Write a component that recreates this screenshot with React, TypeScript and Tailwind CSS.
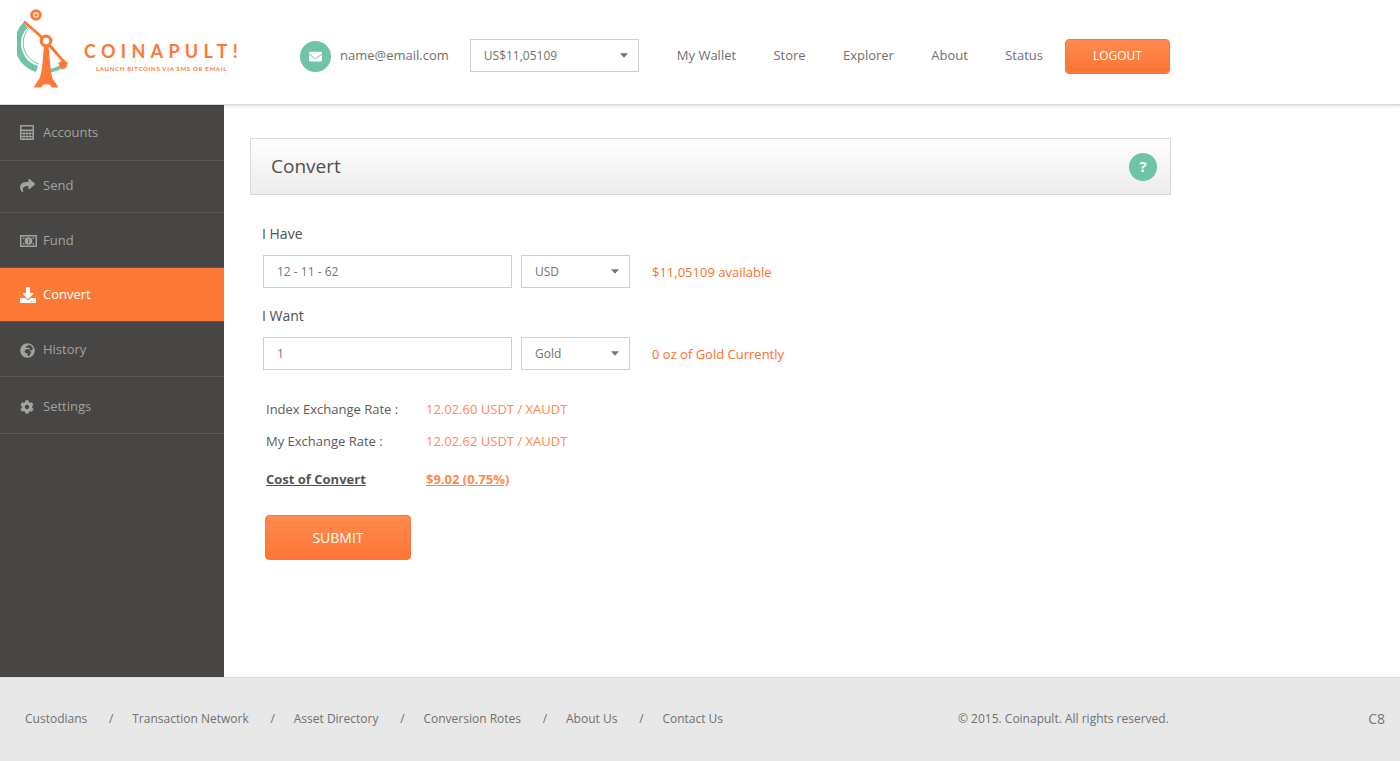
import React from "react";
import { FaEnvelope, FaShare, FaDownload, FaGlobeAfrica, FaCog } from "react-icons/fa";

const Caret = () => (
  <svg width="8" height="5" viewBox="0 0 8 5" className="shrink-0">
    <path d="M0 0.2h8L4 4.8z" fill="#757575" />
  </svg>
);

const Calc = ({ className }: { className?: string }) => (
  <svg width="14" height="15" viewBox="0 0 14 15" className={className}>
    <path fill="currentColor" fillRule="evenodd" d="M1 0h12a1 1 0 0 1 1 1v13a1 1 0 0 1-1 1H1a1 1 0 0 1-1-1V1a1 1 0 0 1 1-1zm.5 1.5v3h11v-3zm0 4.5v2h2v-2zm3 0v2h2v-2zm3 0v2h2v-2zm3 0v2h2v-2zm-9 3v2h2v-2zm3 0v2h2v-2zm3 0v2h2v-2zm3 0v2h2v-2zm-9 3v1.500h2V12zm3 0v1.500h2V12zm3 0v1.500h2V12zm3 0v1.500h2V12z" />
  </svg>
);

const Money = () => (
  <svg width="17" height="12" viewBox="0 0 17 12">
    <path fill="currentColor" fillRule="evenodd" d="M0 0h17v12H0zM1.500 1.500v9h14v-9zM8.500 2.200a3.800 3.800 0 1 1 0 7.600 3.800 3.800 0 0 1 0-7.600zM3 2.500l1.800 0A2 2 0 0 1 3 4.300zM14 2.500v1.800A2 2 0 0 1 12.200 2.500zM3 9.500V7.700A2 2 0 0 1 4.800 9.500zM14 9.500h-1.800A2 2 0 0 1 14 7.700z" />
    <path fill="#474644" d="M8 4l1.200-.6v5H8z" opacity="0.75" />
  </svg>
);

const Logo = () => (
  <svg width="52" height="80" viewBox="17 9 52 80" className="shrink-0">
    <path d="M25.500 25A26.500 26.500 0 0 0 37 69" fill="none" stroke="#6fc3a6" strokeWidth="6.500" />
    <path d="M30 27A22 22 0 0 0 39 64" fill="none" stroke="#6fc3a6" strokeWidth="1" />
    <path d="M50 70.500Q56 70 61 66.500" stroke="#6fc3a6" strokeWidth="3.500" fill="none" />
    <circle cx="36" cy="15" r="5.800" fill="#fd7a36" />
    <circle cx="36" cy="15" r="2.200" fill="none" stroke="#fff" strokeWidth="1.200" />
    <path d="M24 21.500 L46 41 L64 62" stroke="#fd7a36" strokeWidth="2.800" fill="none" />
    <path d="M58 63l6-3 4 3-2 5-4.500 1.500z" fill="#fd7a36" />
    <path d="M44 46h4.500L50.500 68 52 77.500 58.500 87.500H52L49.500 84.500H43.500L41 87.500H33.500L40 77.500 42 68z" fill="#fd7a36" />
    <circle cx="46" cy="41" r="4.800" fill="#fff" stroke="#fd7a36" strokeWidth="3.200" />
  </svg>
);

const navItems = [
  { label: "Accounts", icon: <Calc />, cls: "h-[56px]" },
  { label: "Send", icon: <FaShare size={15} />, cls: "h-[52px] pb-[2px]" },
  { label: "Fund", icon: <Money />, cls: "h-[55px] pt-[2px]" },
  { label: "Convert", icon: <FaDownload size={16} />, cls: "h-[54px]", active: true },
  { label: "History", icon: <FaGlobeAfrica size={15} />, cls: "h-[55px] pt-[2px]" },
  { label: "Settings", icon: <FaCog size={14} />, cls: "h-[57px] pt-[4px]" },
];

const Select = ({ value, cls }: { value: string; cls: string }) => (
  <div className={`flex h-[33px] items-center justify-between border border-[#cfcfcf] bg-white pl-[13px] pr-[10px] text-[12px] text-[#737373] ${cls}`}>
    <span>{value}</span>
    <Caret />
  </div>
);

const FieldRow = ({ value, unit, note }: { value: string; unit: string; note: string }) => (
  <div className="flex items-center">
    <input
      readOnly
      value={value}
      className="h-[33px] w-[249px] border border-[#cfcfcf] bg-white pl-[13px] text-[12px] text-[#777] outline-none"
    />
    <Select value={unit} cls="ml-[9px] w-[109px]" />
    <span className="ml-[22px] pt-[3px] text-[13px] text-[#fb6f2c]">{note}</span>
  </div>
);

const btn = "flex items-center justify-center rounded-[4px] border border-[#f9763a] bg-gradient-to-b from-[#ff8a50] to-[#fd7533] text-white";

const footerLinks = ["Custodians", "Transaction Network", "Asset Directory", "Conversion Rotes", "About Us", "Contact Us"];

export default function App() {
  return (
    <div className="flex h-[761px] w-[1400px] flex-col overflow-hidden bg-white font-['Open_Sans',sans-serif] text-[#666]">
      <header className="z-10 flex h-[105px] shrink-0 items-center border-b border-[#d8d8d8] bg-white pl-[17px] pt-[8px] shadow-[0_1px_3px_rgba(0,0,0,0.15)]">
        <div className="flex w-[283px] items-center self-start pt-[1px]">
          <Logo />
          <div className="ml-[15px] mt-[16px] flex flex-col">
            <span className="whitespace-nowrap font-['Lato',sans-serif] text-[18px] font-bold leading-[20px] tracking-[5.3px] text-[#fd7a36]">COINAPULT!</span>
            <span className="mt-[4px] whitespace-nowrap pl-[12px] font-['Lato',sans-serif] text-[6px] font-bold leading-[8px] tracking-[0.7px] text-[#fd7a36]">LAUNCH BITCOINS VIA SMS OR EMAIL</span>
          </div>
        </div>
        <div className="flex h-[31px] w-[31px] items-center justify-center rounded-full bg-[#6fc3a6] text-white">
          <FaEnvelope size={13} />
        </div>
        <span className="ml-[9px] text-[13px] text-[#707070]">name@email.com</span>
        <Select value="US$11,05109" cls="-mt-[1px] ml-[21px] w-[169px]" />
        <nav className="ml-[38px] flex items-center gap-[37.3px] text-[13px] text-[#707070]">
          <span>My Wallet</span>
          <span>Store</span>
          <span>Explorer</span>
          <span>About</span>
          <span>Status</span>
        </nav>
        <div className={`${btn} ml-[22px] h-[35px] w-[105px] text-[12px]`}>LOGOUT</div>
      </header>

      <div className="flex min-h-0 flex-1">
        <aside className="w-[224px] shrink-0 bg-[#474644]">
          {navItems.map((n) => (
            <div
              key={n.label}
              className={`flex items-center border-b border-[#5a5957] pl-[20px] text-[13px] ${n.cls} ${n.active ? "bg-[#fd7a36] text-white" : "text-[#a3a2a0]"}`}
            >
              <span className="flex w-[23px] shrink-0 items-center">{n.icon}</span>
              <span>{n.label}</span>
            </div>
          ))}
        </aside>

        <main className="min-w-0 flex-1 pl-[26px] pt-[33px]">
          <div className="flex h-[57px] w-[921px] items-center justify-between border border-[#d9d9d9] bg-gradient-to-b from-white to-[#ececec] pl-[20px] pr-[13px]">
            <h1 className="text-[19px] font-normal text-[#505050]">Convert</h1>
            <div className="flex h-[28px] w-[28px] items-center justify-center rounded-full bg-[#6fc3a6] text-[15px] font-bold text-white">?</div>
          </div>

          <div className="pl-[12px] pt-[29px]">
            <div className="text-[14px] leading-[20px] text-[#505050]">I Have</div>
            <div className="ml-[1px] mt-[11px]">
              <FieldRow value="12 - 11 - 62" unit="USD" note="$11,05109 available" />
            </div>
            <div className="mt-[18px] text-[14px] leading-[20px] text-[#505050]">I Want</div>
            <div className="ml-[1px] mt-[11px]">
              <FieldRow value="1" unit="Gold" note="0 oz of Gold Currently" />
            </div>

            <div className="ml-[4px] mt-[30px] grid grid-cols-[160px_1fr] text-[13px]">
              <span className="leading-[18px] text-[#5c5c5c]">Index Exchange Rate :</span>
              <span className="leading-[18px] text-[#ff8a50]">12.02.60 USDT / XAUDT</span>
              <span className="mt-[14px] leading-[18px] text-[#5c5c5c]">My Exchange Rate :</span>
              <span className="mt-[14px] leading-[18px] text-[#ff8a50]">12.02.62 USDT / XAUDT</span>
              <span className="mt-[20px] font-bold leading-[18px] text-[#555] underline">Cost of Convert</span>
              <span className="mt-[20px] font-bold leading-[18px] text-[#ff8a50] underline">$9.02 (0.75%)</span>
            </div>

            <div className={`${btn} ml-[3px] mt-[27px] h-[45px] w-[146px] text-[14px]`}>SUBMIT</div>
          </div>
        </main>
      </div>

      <footer className="flex h-[84px] shrink-0 items-center border-t border-[#dcdcdc] bg-[#e8e8e8] pb-[2px] pl-[25px] pr-[15px] text-[12px] text-[#707070]">
        <div className="flex w-[933px] items-center">
          {footerLinks.map((l, i) => (
            <React.Fragment key={l}>
              {i > 0 && <span className="w-[45px] pl-[3px] text-center">/</span>}
              <span>{l}</span>
            </React.Fragment>
          ))}
        </div>
        <span>© 2015. Coinapult. All rights reserved.</span>
        <span className="ml-auto text-[14px] text-[#777]">C8</span>
      </footer>
    </div>
  );
}
